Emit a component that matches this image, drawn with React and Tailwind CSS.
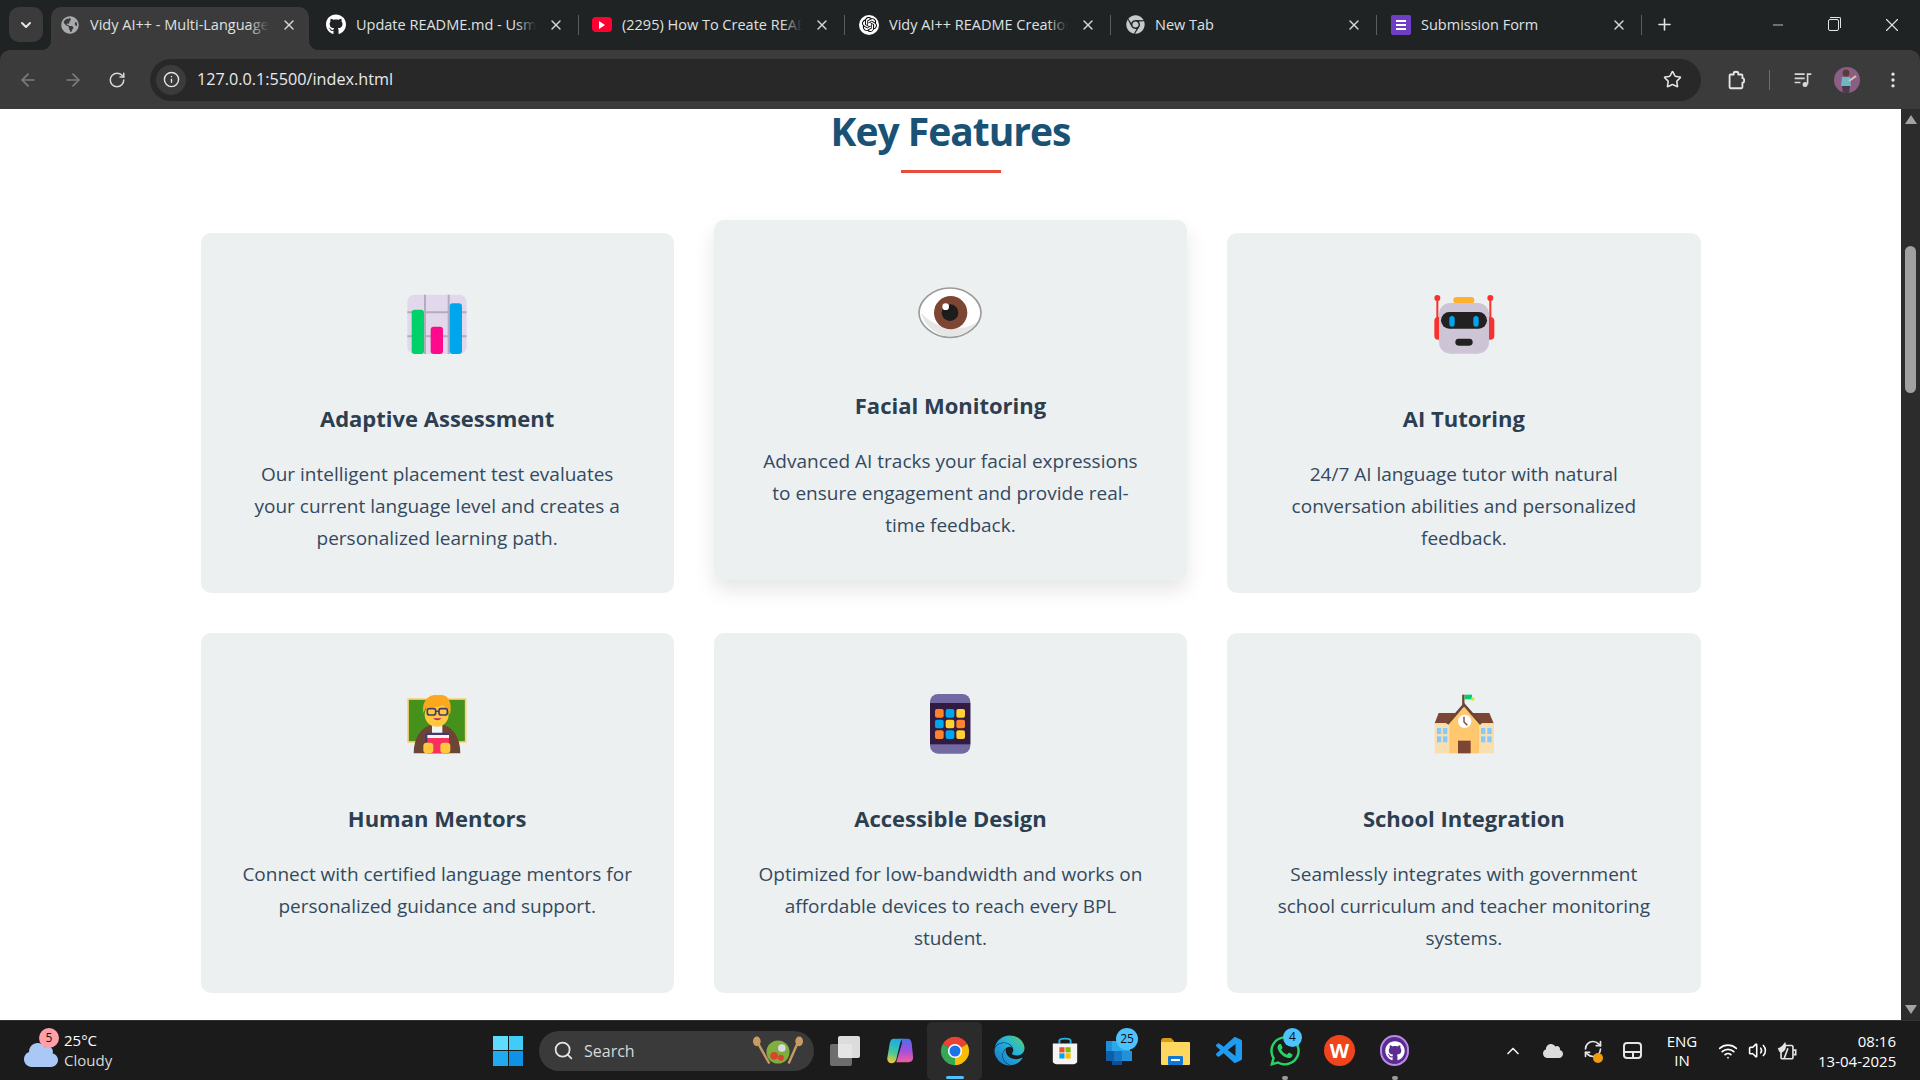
import React from 'react';
import {
  ArrowLeft,
  ArrowRight,
  RotateCw,
  Info,
  Star,
  MoreVertical,
  X,
  Plus,
  Minus,
  ChevronDown,
  ChevronUp,
  Search,
  Wifi,
  Volume2,
  RefreshCw,
} from 'lucide-react';
import { FaGithub, FaChrome, FaGlobeAmericas, FaWhatsapp, FaEdge, FaCloud } from 'react-icons/fa';
import { SiOpenai } from 'react-icons/si';
import { VscVscode } from 'react-icons/vsc';

const uiFont = { fontFamily: '"Open Sans", "Noto Sans", sans-serif' };

function ChartIcon() {
  return (
    <svg viewBox="76 67 192 192" className="w-16 h-16">
      <rect x="83" y="75" width="178" height="178" rx="22" fill="#E1D8EC" />
      <path d="M136 75V253M207 75V253M83 128H261M83 200H261" stroke="#B4ACBC" strokeWidth="6" />
      <rect x="96" y="120" width="37" height="133" rx="9" fill="#00D26A" />
      <rect x="153" y="171" width="37" height="82" rx="9" fill="#FF0A8C" />
      <rect x="210" y="101" width="37" height="152" rx="9" fill="#00A6ED" />
    </svg>
  );
}

function EyeIcon() {
  return (
    <svg viewBox="54 27 192 192" className="w-16 h-16">
      <path d="M150 54C205 54 243 95 243 128C243 161 205 202 150 202C95 202 57 161 57 128C57 95 95 54 150 54Z" fill="#FFFFFF" stroke="#9B9B9B" strokeWidth="5" />
      <path d="M63 128C72 165 110 199 150 199C185 199 215 182 232 155C200 180 120 190 63 128Z" fill="#E6E6E6" />
      <circle cx="152" cy="128" r="50" fill="#7D4533" />
      <circle cx="150" cy="128" r="25" fill="#1C1C1C" />
      <circle cx="137" cy="110" r="10" fill="#FFFFFF" />
    </svg>
  );
}

function RobotIcon() {
  return (
    <svg viewBox="51 37 192 192" className="w-16 h-16">
      <rect x="58" y="112" width="180" height="68" rx="12" fill="#F8312F" />
      <path d="M67 55V120M226 55V120" stroke="#F8312F" strokeWidth="6" />
      <circle cx="67" cy="55" r="9" fill="#F8312F" />
      <circle cx="226" cy="55" r="9" fill="#F8312F" />
      <rect x="115" y="52" width="63" height="20" rx="10" fill="#FFB02E" />
      <rect x="72" y="70" width="150" height="152" rx="34" fill="#CDC4D6" />
      <rect x="78" y="97" width="138" height="50" rx="25" fill="#212121" />
      <rect x="103" y="109" width="16" height="32" rx="8" fill="#00A6ED" />
      <rect x="175" y="109" width="16" height="32" rx="8" fill="#00A6ED" />
      <rect x="121" y="177" width="52" height="21" rx="10" fill="#212121" />
    </svg>
  );
}

function TeacherIcon() {
  return (
    <svg viewBox="46 24 192 192" className="w-16 h-16">
      <rect x="55" y="45" width="173" height="129" fill="#44911B" stroke="#FFCE7C" strokeWidth="5" />
      <path d="M72 208C72 160 95 130 125 122H160C190 130 212 160 212 208Z" fill="#6D4534" />
      <path d="M127 122H158V150H127Z" fill="#F4F4F4" />
      <circle cx="141" cy="92" r="36" fill="#FFC83D" />
      <path d="M101 88C94 45 125 28 145 34C172 28 190 50 181 92C174 76 166 68 160 64C145 72 115 70 108 72Z" fill="#FBA81F" />
      <rect x="113" y="74" width="25" height="19" rx="6" fill="none" stroke="#433B6B" strokeWidth="5" />
      <rect x="148" y="74" width="25" height="19" rx="6" fill="none" stroke="#433B6B" strokeWidth="5" />
      <path d="M138 82H148" stroke="#433B6B" strokeWidth="4" />
      <path d="M130 103C138 111 148 111 156 103Z" fill="#BB1D80" />
      <rect x="107" y="146" width="71" height="30" rx="6" fill="#433B6B" />
      <rect x="113" y="162" width="65" height="46" fill="#F92F60" />
      <rect x="113" y="153" width="65" height="9" fill="#F4F4F4" />
      <rect x="101" y="176" width="30" height="32" rx="10" fill="#FFC83D" />
      <rect x="152" y="176" width="30" height="32" rx="10" fill="#FFC83D" />
    </svg>
  );
}

function TabletIcon() {
  const colors = ['#FF822D', '#00A6ED', '#FFD133', '#00A6ED', '#FFD133', '#FF822D', '#FF822D', '#00A6ED', '#FFD133'];
  return (
    <svg viewBox="52 24 192 192" className="w-16 h-16">
      <rect x="88" y="30" width="121" height="179" rx="24" fill="#736AA4" />
      <rect x="88" y="57" width="121" height="124" fill="#321B41" />
      {colors.map((c, i) => (
        <rect key={i} x={103 + (i % 3) * 32} y={75 + Math.floor(i / 3) * 32} width="26" height="26" rx="6" fill={c} />
      ))}
    </svg>
  );
}

function SchoolIcon() {
  return (
    <svg viewBox="50 24 192 192" className="w-16 h-16">
      <path d="M144 32V70" stroke="#6D4534" strokeWidth="7" />
      <path d="M148 32H170V46H148Z" fill="#00D26A" />
      <path d="M168 40H177V50H168Z" fill="#C3EF3C" />
      <path d="M58 118L70 87H222L235 118Z" fill="#7D4533" />
      <rect x="58" y="118" width="178" height="90" fill="#F9DEB0" />
      <path d="M102 208V115L146 70L191 115V208Z" fill="#FFC86E" />
      <path d="M96 120L146 62L197 120" fill="none" stroke="#6D4534" strokeWidth="8" />
      <circle cx="148" cy="112" r="20" fill="#FFFFFF" />
      <path d="M146 98V114L156 124" fill="none" stroke="#6D4534" strokeWidth="4" />
      <rect x="128" y="170" width="38" height="38" fill="#7D4533" />
      {[65, 83, 197, 216].map((x) => (
        <React.Fragment key={x}>
          <rect x={x} y="132" width="13" height="18" fill="#83CBFF" />
          <rect x={x} y="157" width="13" height="18" fill="#83CBFF" />
        </React.Fragment>
      ))}
    </svg>
  );
}

const features = [
  { title: 'Adaptive Assessment', text: 'Our intelligent placement test evaluates your current language level and creates a personalized learning path.', icon: <ChartIcon /> },
  { title: 'Facial Monitoring', text: 'Advanced AI tracks your facial expressions to ensure engagement and provide real-time feedback.', icon: <EyeIcon />, lifted: true },
  { title: 'AI Tutoring', text: '24/7 AI language tutor with natural conversation abilities and personalized feedback.', icon: <RobotIcon /> },
  { title: 'Human Mentors', text: 'Connect with certified language mentors for personalized guidance and support.', icon: <TeacherIcon /> },
  { title: 'Accessible Design', text: 'Optimized for low-bandwidth and works on affordable devices to reach every BPL student.', icon: <TabletIcon /> },
  { title: 'School Integration', text: 'Seamlessly integrates with government school curriculum and teacher monitoring systems.', icon: <SchoolIcon /> },
];

function FeatureCard({ title, text, icon, lifted }) {
  return (
    <div className={`h-[360px] bg-[#ecf0f1] rounded-[10px] px-[40px] pt-[59px] flex flex-col items-center text-center ${lifted ? '-translate-y-[13px] shadow-[0_10px_20px_rgba(0,0,0,0.1)]' : ''}`}>
      {icon}
      <h3 className="mt-[46px] text-[22px] leading-[32px] font-bold text-[#2c3e50]">{title}</h3>
      <p className="mt-[24px] text-[19px] leading-[32px] text-[#34495e]">{text}</p>
    </div>
  );
}

function FormsIcon() {
  return (
    <div className="w-[20px] h-[20px] bg-[#6e3fc4] rounded-[2px] flex flex-col items-center justify-center gap-[2px]">
      <div className="w-[10px] h-[2px] bg-white" />
      <div className="w-[10px] h-[2px] bg-white" />
      <div className="w-[10px] h-[2px] bg-white" />
    </div>
  );
}

function YoutubeIcon() {
  return (
    <div className="w-[20px] h-[15px] bg-[#ff0033] rounded-[4px] flex items-center justify-center">
      <div className="w-0 h-0 border-y-[4px] border-y-transparent border-l-[6px] border-l-white" />
    </div>
  );
}

const tabs = [
  { title: 'Vidy AI++ - Multi-Language Learning', width: 'w-[258px]', pad: 'pl-[9px]', icon: <FaGlobeAmericas className="text-[#a8abad]" size={18} />, active: true },
  { title: 'Update README.md - Usman', width: 'w-[270px]', pad: 'pl-[17px]', icon: <FaGithub className="text-white" size={21} /> },
  { title: '(2295) How To Create README', width: 'w-[266px]', pad: 'pl-[13px]', icon: <YoutubeIcon /> },
  { title: 'Vidy AI++ README Creation', width: 'w-[266px]', pad: 'pl-[14px]', icon: <div className="w-[20px] h-[20px] rounded-full bg-white flex items-center justify-center"><SiOpenai className="text-black" size={15} /></div> },
  { title: 'New Tab', width: 'w-[266px]', pad: 'pl-[14px]', icon: <FaChrome className="text-[#c7c9cb]" size={19} /> },
  { title: 'Submission Form', width: 'w-[265px]', pad: 'pl-[14px]', icon: <FormsIcon /> },
];

function Tab({ title, width, pad, icon, active }) {
  return (
    <div className={`relative h-full flex items-center shrink-0 pb-[8px] ${width} ${pad} ${active ? 'pr-[12px] bg-[#3b3b3b] rounded-t-[10px]' : 'pr-[15px]'}`}>
      <div className="w-[20px] flex justify-center shrink-0">{icon}</div>
      <div className="relative ml-[10px] flex-1 overflow-hidden whitespace-nowrap text-[14.5px] text-[#dfe1e2]">
        {title}
        <div className={`absolute right-0 top-0 bottom-0 w-[20px] bg-gradient-to-r from-transparent ${active ? 'to-[#3b3b3b]' : 'to-[#202324]'}`} />
      </div>
      <X size={16} strokeWidth={2} className="ml-[12px] text-[#d5d7d8] shrink-0" />
      {!active && <div className="absolute right-0 top-[8px] h-[20px] w-px bg-[#5a5c5e]" />}
      {active && (
        <>
          <div className="absolute -left-[10px] bottom-0 w-[10px] h-[10px] bg-[radial-gradient(circle_at_0_0,transparent_10px,#3b3b3b_10.5px)]" />
          <div className="absolute -right-[10px] bottom-0 w-[10px] h-[10px] bg-[radial-gradient(circle_at_100%_0,transparent_10px,#3b3b3b_10.5px)]" />
        </>
      )}
    </div>
  );
}

function TabStrip() {
  return (
    <div className="h-[50px] bg-[#202324] flex items-stretch pt-[7px] shrink-0 text-white">
      <div className="ml-[9px] mr-[8px] mb-[8px] w-[34px] bg-[#3b3b3b] rounded-[10px] flex items-center justify-center">
        <ChevronDown size={16} strokeWidth={3} className="text-[#e5e5e5]" />
      </div>
      {tabs.map((t) => (
        <Tab key={t.title} {...t} />
      ))}
      <div className="w-[44px] pb-[8px] flex items-center justify-center">
        <Plus size={19} strokeWidth={2} className="text-[#e5e5e5]" />
      </div>
      <div className="flex-1" />
      <div className="w-[48px] pb-[8px] flex items-center justify-center"><Minus size={16} strokeWidth={1.2} className="text-[#e5e5e5]" /></div>
      <div className="w-[62px] pb-[8px] flex items-center justify-center">
        <div className="relative w-[11px] h-[12px] border border-[#e5e5e5] rounded-[2px]">
          <div className="absolute -top-[3px] left-[1px] w-[11px] h-[11px] border-t border-r border-[#e5e5e5] rounded-tr-[2px]" />
        </div>
      </div>
      <div className="w-[56px] pb-[8px] flex items-center justify-center"><X size={22} strokeWidth={1.2} className="text-[#e5e5e5]" /></div>
    </div>
  );
}

function ExtensionIcon() {
  return (
    <svg viewBox="0 0 24 24" width="22" height="22" fill="none" stroke="#e5e5e5" strokeWidth="2" strokeLinejoin="round">
      <path d="M6 6H9.5V4.5C9.5 2.5 14.5 2.5 14.5 4.5V6H18C18.6 6 19 6.4 19 7V10C21.5 10 21.5 15 19 15V20C19 20.6 18.6 21 18 21H6C5.4 21 5 20.6 5 20V7C5 6.4 5.4 6 6 6Z" />
    </svg>
  );
}

function MediaIcon() {
  return (
    <svg viewBox="0 0 24 24" width="20" height="20" fill="none" stroke="#d5d7d8" strokeWidth="2">
      <path d="M2 5H14M2 10H14M2 15H9" />
      <path d="M17.5 17V5H22" />
      <circle cx="14.5" cy="17.5" r="3" fill="#d5d7d8" stroke="none" />
    </svg>
  );
}

function Avatar() {
  return (
    <svg viewBox="0 0 26 26" width="26" height="26" className="rounded-full">
      <rect width="26" height="26" fill="#8b5e83" />
      <circle cx="12" cy="6" r="3.5" fill="#5a3a3a" />
      <path d="M8 10H16L17 19H7Z" fill="#6fb6c4" />
      <path d="M8 19H16L15 26H9Z" fill="#4a3a4a" />
      <path d="M15 14L22 9" stroke="#d9c6b0" strokeWidth="2" />
    </svg>
  );
}

function Toolbar() {
  return (
    <div className="h-[59px] bg-[#3b3b3b] rounded-t-[10px] flex items-center shrink-0">
      <div className="w-[150px] flex items-center pl-[18px] gap-[25px]">
        <ArrowLeft size={20} className="text-[#7c7e80]" />
        <ArrowRight size={20} className="text-[#7c7e80]" />
        <RotateCw size={18} className="text-[#d5d7d8]" />
      </div>
      <div className="w-[1551px] h-[42px] bg-[#282828] rounded-full flex items-center pl-[6px] pr-[19px]">
        <div className="w-[30px] h-[30px] rounded-full bg-[#3b3b3b] flex items-center justify-center">
          <Info size={17} className="text-[#e5e5e5]" />
        </div>
        <span className="ml-[11px] text-[16.2px] text-[#e8eaed]">127.0.0.1:5500/index.html</span>
        <Star size={19} className="ml-auto text-[#e5e5e5]" />
      </div>
      <div className="ml-[24px]"><ExtensionIcon /></div>
      <div className="ml-[22px] w-px h-[20px] bg-[#6a6c6e]" />
      <div className="ml-[23px]"><MediaIcon /></div>
      <div className="ml-[21px]"><Avatar /></div>
      <MoreVertical size={20} className="ml-[23px] text-[#e5e5e5]" />
    </div>
  );
}

function Scrollbar() {
  return (
    <div className="w-[19px] bg-[#2c2c2c] flex flex-col items-center shrink-0">
      <div className="mt-[6px] w-0 h-0 border-x-[6px] border-x-transparent border-b-[9px] border-b-[#a3a3a3]" />
      <div className="mt-[122px] w-[11px] h-[147px] rounded-full bg-[#a0a0a0]" />
      <div className="mt-auto mb-[6px] w-0 h-0 border-x-[6px] border-x-transparent border-t-[9px] border-t-[#a3a3a3]" />
    </div>
  );
}

function ChromeLogo({ size = 32 }) {
  return (
    <svg viewBox="0 0 48 48" width={size} height={size}>
      <path d="M24 24L6.7 14A20 20 0 0 1 41.3 14Z" fill="#EA4335" />
      <path d="M24 24L41.3 14A20 20 0 0 1 24 44Z" fill="#FBBC04" />
      <path d="M24 24L24 44A20 20 0 0 1 6.7 14Z" fill="#34A853" />
      <circle cx="24" cy="24" r="10" fill="#FFFFFF" />
      <circle cx="24" cy="24" r="7.8" fill="#1A73E8" />
    </svg>
  );
}

function CopilotLogo() {
  return (
    <svg viewBox="0 0 32 32" width="30" height="30">
      <defs>
        <linearGradient id="cpA" x1="0.5" y1="0" x2="0.3" y2="1">
          <stop offset="0" stopColor="#1ea9e8" />
          <stop offset="0.55" stopColor="#3fc7a0" />
          <stop offset="1" stopColor="#f7c82e" />
        </linearGradient>
        <linearGradient id="cpB" x1="0.5" y1="0" x2="0.5" y2="1">
          <stop offset="0" stopColor="#4f6fe8" />
          <stop offset="0.5" stopColor="#a24fe0" />
          <stop offset="1" stopColor="#f0609a" />
        </linearGradient>
      </defs>
      <path d="M18 3H24C27 3 28 5 28.5 8L30 23C30 26 28 28 25 28H12L18 8Z" fill="url(#cpB)" />
      <path d="M9 3H20C18 3 17 5 16 8L12 25C11 28 9 29 7 29C3.5 29 2 26 2.5 23L5 8C5.5 5 7 3 9 3Z" fill="url(#cpA)" />
    </svg>
  );
}

function StoreLogo() {
  return (
    <svg viewBox="0 0 32 32" width="30" height="32">
      <path d="M10 8V5C10 2 22 2 22 5V8" fill="none" stroke="#27b5ec" strokeWidth="2" />
      <path d="M3 8H29V27C29 29 27 30 25 30H7C5 30 3 29 3 27Z" fill="#f4f4f4" />
      <rect x="10" y="12" width="5.5" height="5.5" fill="#f25022" />
      <rect x="16.5" y="12" width="5.5" height="5.5" fill="#7fba00" />
      <rect x="10" y="18.5" width="5.5" height="5.5" fill="#00a4ef" />
      <rect x="16.5" y="18.5" width="5.5" height="5.5" fill="#ffb900" />
    </svg>
  );
}

function OutlookLogo() {
  return (
    <svg viewBox="0 0 32 32" width="32" height="32">
      <rect x="2" y="6" width="18" height="10" fill="#1f8fd8" />
      <rect x="8" y="6" width="18" height="10" fill="#2aa8ea" />
      <rect x="2" y="16" width="8" height="10" fill="#0f5fa8" />
      <rect x="10" y="16" width="8" height="10" fill="#1677c4" />
      <rect x="18" y="16" width="10" height="10" fill="#2191da" />
      <rect x="8" y="26" width="10" height="4" fill="#0c4f92" />
    </svg>
  );
}

function FolderLogo() {
  return (
    <svg viewBox="0 0 32 32" width="32" height="32">
      <path d="M2 6C2 4 3 3 5 3H12L15 6V28H2Z" fill="#d99a14" />
      <rect x="2" y="7" width="29" height="23" rx="1" fill="#ffd75e" />
      <rect x="9" y="21" width="15" height="9" rx="1" fill="#0f78d4" />
      <rect x="12" y="24" width="9" height="2" fill="#ffffff" />
    </svg>
  );
}

function SaladArt() {
  return (
    <svg viewBox="0 0 54 32" width="52" height="32">
      <path d="M4 4L18 29M49 4L38 29" stroke="#c99a62" strokeWidth="2.5" />
      <ellipse cx="5" cy="6" rx="4" ry="5" fill="#c99a62" />
      <ellipse cx="49" cy="6" rx="4" ry="5" fill="#c99a62" />
      <circle cx="27" cy="17" r="12" fill="#7fae3d" />
      <circle cx="23" cy="21" r="4" fill="#d9432f" />
      <circle cx="31" cy="13" r="4" fill="#d8d8e6" />
      <circle cx="30" cy="23" r="3" fill="#d9432f" />
    </svg>
  );
}

function BatteryLeaf() {
  return (
    <svg viewBox="0 0 24 24" width="22" height="22" fill="none" stroke="#e5e5e5" strokeWidth="1.8">
      <path d="M9 6H17C18 6 18.5 6.5 18.5 7.5V19C18.5 20 18 20.5 17 20.5H7C6 20.5 5.5 20 5.5 19V13" />
      <path d="M19 11H21.5V16H19" />
      <path d="M2 9C6 8 9 4 10 2C12 7 11 12 6 14C4 14 3 12 2 9Z" fill="#e5e5e5" stroke="none" />
      <path d="M9 20L13 9" stroke="#e5e5e5" />
    </svg>
  );
}

function Badge({ children, className }) {
  return (
    <div className={`absolute rounded-full flex items-center justify-center text-[12px] text-[#111] ${className}`}>{children}</div>
  );
}

function TaskIcon({ children, width = 'w-[55px]' }) {
  return <div className={`relative h-[50px] flex items-center justify-center shrink-0 ${width}`}>{children}</div>;
}

function Taskbar() {
  return (
    <div className="h-[60px] bg-[#1b1b1b] border-t border-[#333] flex items-center shrink-0 text-white">
      <div className="w-[489px] flex items-center pl-[24px] shrink-0">
        <div className="relative w-[34px] h-[30px]">
          <FaCloud size={34} className="absolute top-[2px] left-0 text-[#a9c8f5]" />
          <Badge className="-top-[8px] left-[15px] w-[20px] h-[20px] bg-[#ff9fa8]">5</Badge>
        </div>
        <div className="ml-[6px] mb-[2px] text-[15px] leading-[20px]">
          <div>25°C</div>
          <div className="text-[#d8d8d8]">Cloudy</div>
        </div>
      </div>
      <div className="w-[30px] h-[30px] grid grid-cols-2 gap-[1px] ml-[4px] shrink-0">
        <div className="bg-[#5fdcfb]" />
        <div className="bg-[#3fcdf8]" />
        <div className="bg-[#20aaf0]" />
        <div className="bg-[#0f91e6]" />
      </div>
      <div className="ml-[16px] w-[275px] h-[40px] rounded-full bg-[#3a3a3a] flex items-center pl-[14px] pr-[10px] shrink-0">
        <Search size={21} className="text-[#e5e5e5]" />
        <span className="ml-[10px] text-[16px] text-[#d8d8d8]">Search</span>
        <div className="ml-auto"><SaladArt /></div>
      </div>
      <div className="ml-[3px] flex items-center">
        <TaskIcon>
          <div className="relative w-[30px] h-[30px]">
            <div className="absolute left-0 bottom-0 w-[22px] h-[22px] rounded-[2px] bg-[#6d6d6d]" />
            <div className="absolute right-0 top-0 w-[22px] h-[22px] rounded-[2px] bg-[#f2f2f2]/90" />
          </div>
        </TaskIcon>
        <TaskIcon><CopilotLogo /></TaskIcon>
        <div className="relative w-[55px] h-[58px] rounded-[5px] bg-[#2b2b2b] flex items-center justify-center">
          <ChromeLogo size={34} />
          <div className="absolute bottom-[1px] w-[18px] h-[3px] rounded-full bg-[#4cc2ff]" />
        </div>
        <TaskIcon>
          <svg width="0" height="0" className="absolute">
            <defs>
              <linearGradient id="edgeG" x1="0" y1="1" x2="1" y2="0">
                <stop offset="0" stopColor="#1273c9" />
                <stop offset="0.6" stopColor="#26b4dc" />
                <stop offset="1" stopColor="#5fd35a" />
              </linearGradient>
            </defs>
          </svg>
          <FaEdge size={31} className="fill-[url(#edgeG)]" />
        </TaskIcon>
        <TaskIcon><StoreLogo /></TaskIcon>
        <TaskIcon>
          <OutlookLogo />
          <Badge className="top-[2px] right-[9px] w-[22px] h-[22px] bg-[#4cc2ff]">25</Badge>
        </TaskIcon>
        <TaskIcon><FolderLogo /></TaskIcon>
        <TaskIcon><VscVscode size={32} className="text-[#1f9cf0]" /></TaskIcon>
        <TaskIcon>
          <FaWhatsapp size={34} className="text-[#25d366]" />
          <Badge className="top-[2px] right-[10px] w-[19px] h-[19px] bg-[#4cc2ff]">4</Badge>
          <div className="absolute -bottom-[4px] w-[6px] h-[4px] rounded-full bg-[#9a9a9a]" />
        </TaskIcon>
        <TaskIcon>
          <div className="w-[31px] h-[31px] rounded-full bg-[#f0441d] flex items-center justify-center text-[20px] font-bold text-white">W</div>
        </TaskIcon>
        <TaskIcon>
          <div className="w-[29px] h-[31px] rounded-full bg-[#5c2d91] border-[2px] border-[#b78ae6] flex items-center justify-center">
            <FaGithub size={20} className="text-white" />
          </div>
          <div className="absolute -bottom-[4px] w-[6px] h-[4px] rounded-full bg-[#9a9a9a]" />
        </TaskIcon>
      </div>
      <div className="ml-auto pr-[24px] flex items-center">
        <ChevronUp size={20} className="text-[#f0f0f0]" />
        <FaCloud size={20} className="ml-[20px] text-[#dcdcdc]" />
        <div className="relative ml-[20px] w-[20px] h-[24px]">
          <RefreshCw size={20} className="text-[#e5e5e5]" />
          <div className="absolute right-0 bottom-0 w-[10px] h-[10px] rounded-full bg-[#f59a0c]" />
        </div>
        <div className="ml-[20px] w-[19px] h-[17px] border-2 border-[#e5e5e5] rounded-[4px] flex flex-col justify-end">
          <div className="h-[6px] border-t-2 border-[#e5e5e5] flex justify-center">
            <div className="w-[2px] bg-[#e5e5e5]" />
          </div>
        </div>
        <div className="ml-[21px] w-[38px] text-center text-[15px] leading-[19px]">
          <div>ENG</div>
          <div>IN</div>
        </div>
        <Wifi size={20} className="ml-[17px]" />
        <Volume2 size={19} className="ml-[10px]" />
        <div className="ml-[9px]"><BatteryLeaf /></div>
        <div className="ml-[20px] w-[78px] text-right text-[15px] leading-[20px] whitespace-nowrap">
          <div>08:16</div>
          <div>13-04-2025</div>
        </div>
      </div>
    </div>
  );
}

export default function App() {
  return (
    <div className="h-screen flex flex-col overflow-hidden bg-[#202324]" style={uiFont}>
      <TabStrip />
      <Toolbar />
      <div className="flex-1 min-h-0 flex">
        <div className="flex-1 min-w-0 bg-white overflow-hidden">
          <div className="flex flex-col items-center">
            <h2 className="h-[45px] text-[39px] leading-[44px] font-bold text-[#1a5276] tracking-[-1px]">Key Features</h2>
            <div className="mt-[16px] w-[100px] h-[3px] bg-[#e74c3c]" />
            <div className="mt-[60px] w-[1500px] grid grid-cols-3 gap-[40px]">
              {features.map((f) => (
                <FeatureCard key={f.title} {...f} />
              ))}
            </div>
          </div>
        </div>
        <Scrollbar />
      </div>
      <Taskbar />
    </div>
  );
}
